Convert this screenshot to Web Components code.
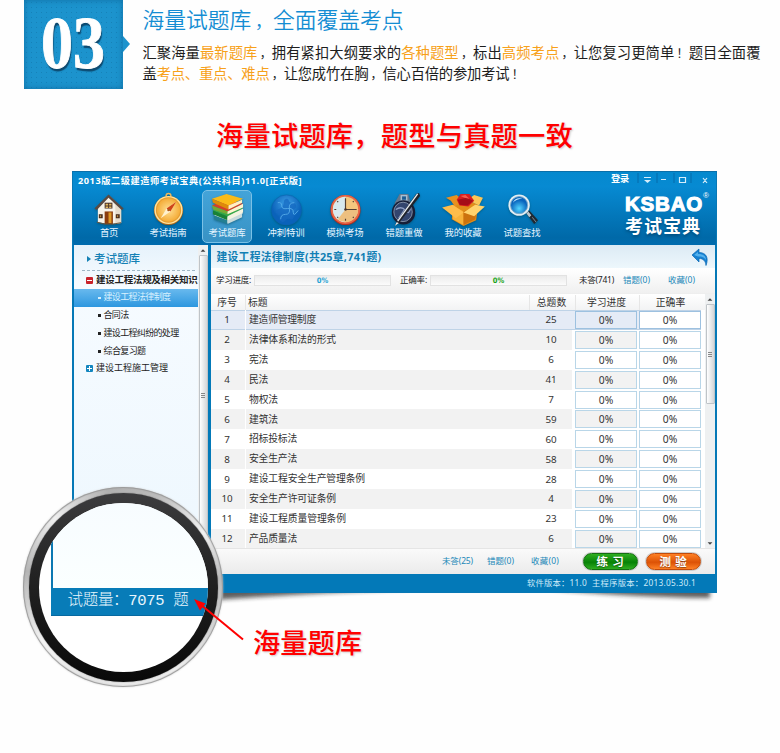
<!DOCTYPE html>
<html lang="zh-CN">
<head>
<meta charset="utf-8">
<title>海量试题库</title>
<style>
html,body{margin:0;padding:0;background:#fefefe}
body{width:780px;height:753px;overflow:hidden;font-family:"Noto Sans","Noto Sans CJK SC",sans-serif}
</style>
</head>
<body>
<promo-page></promo-page>
<script>
const define = (name, html, setup) => customElements.define(name, class extends HTMLElement {
  constructor() { super(); this.attachShadow({ mode: 'open' }); }
  connectedCallback() {
    this.shadowRoot.innerHTML = typeof html === 'function' ? html(this) : html;
    if (setup) setup(this);
  }
});

/* One line of text, tracked to occupy the width given in "w". */
define('fit-text', `<style>:host{display:inline-block;white-space:pre;line-height:1.2;flex:none}span{display:inline-block}</style><span><slot></slot></span>`, el => {
  const w = +el.getAttribute('w');
  if (!w) return;
  const span = el.shadowRoot.querySelector('span');
  const n = [...el.textContent].length;
  const natural = span.getBoundingClientRect().width;
  span.style.letterSpacing = ((w - natural) / n) + 'px';
  el.style.width = w + 'px';
});

/* Section header with the numbered badge; <i> sets a full-width mark towards the middle of its cell */
define('section-head', `<style>
:host{display:flex;height:115px;padding-left:23.500px;box-sizing:border-box}
.badge{position:relative;width:99px;height:89px;flex:none;background-color:#1c93cd;background-image:radial-gradient(#1682b8 .7px,transparent 1px);background-size:5px 5px;box-shadow:inset 0 0 6px #0f6fa4;color:#fff;font:bold 64px/88px "Liberation Serif",serif;text-align:center;text-shadow:1px 2px 1px #0d4a70;-webkit-text-stroke:.8px #fff}
.badge b{display:inline-block;transform:scaleY(1.17);transform-origin:50% 52%;}
.badge::after{content:"";position:absolute;left:99px;top:36px;border:8px solid transparent;border-left:7px solid #1c93cd;border-right:0}
.copy{padding:6px 0 0 20px;width:640px}
h2{margin:0;font-weight:350;font-size:21.800px;line-height:28px;color:#148dd3}
p{margin:9px 0 0;font-size:14.300px;line-height:20.500px;color:#1d1d1d}
em{font-style:normal;color:#f7a11a}
i{font-style:normal;font-size:.84em;padding-left:.19em;line-height:1}
fit-text{line-height:inherit;display:block}
</style>
<div class="badge"><b>03</b></div>
<div class="copy"><h2><fit-text w="261">海量试题库<i>，</i>全面覆盖考点</fit-text></h2>
<p><fit-text w="618">汇聚海量<em>最新题库</em><i>，</i>拥有紧扣大纲要求的<em>各种题型</em><i>，</i>标出<em>高频考点</em><i>，</i>让您复习更简单<i>！</i>题目全面覆</fit-text><fit-text w="381">盖<em>考点、重点、难点</em><i>，</i>让您成竹在胸<i>，</i>信心百倍的参加考试<i>！</i></fit-text></p></div>`);

const ICONS = {
home: `<path d="M6 15 18 4l12 12v16l-12 1L6 31z" fill="#f7f3e9"/><path d="M18 4 30 16v16l-6 1V14z" fill="#e6dccb"/><path d="M2.5 17 17 2.5 32.5 17l-2 1.5L17 6 5 18.5z" fill="#5b4a42"/><path d="M13 11h8v6h-8z" fill="#4b332b"/><path d="M14 12h2.6v2H14zm3.6 0H20v2h-2.400zM14 15h2.600v1.500H14zm3.600 0H20v1.500h-2.400z" fill="#e3b75f"/><path d="M13 20h8.500v13H13z" fill="#8b3d0e"/><path d="M17 21h3v11h-3z" fill="#df9b27"/><path d="M7 23h4v4H7zm17.500 0h4v4h-4z" fill="#402617"/><path d="M8 24h1.500v2H8zm17.500 0H27v2h-1.500z" fill="#bd8c42"/><path d="M5 31l8 2h9l8-1.500" stroke="#6a573e" fill="none"/>`,
compass: `<defs><radialGradient id="a"><stop offset="0" stop-color="#ffe094"/><stop offset="1" stop-color="#f4ac38"/></radialGradient></defs><circle cx="18" cy="4" r="2.500" fill="none" stroke="#eab75d" stroke-width="1.500"/><circle cx="18" cy="19" r="15" fill="#b56a18"/><circle cx="18" cy="18.500" r="14.500" fill="#ffe29b"/><circle cx="18" cy="18.500" r="13" fill="#e39a30"/><circle cx="18" cy="18.500" r="12" fill="url(#a)"/><path d="M26 10 20 20 10 27l6-10z" fill="#fff1ce"/><path d="M26 10 20 20l-4-3z" fill="#cf4318"/><circle cx="18" cy="18.500" r="1.300" fill="#ab5918"/>`,
books: `<path d="m4 24 16-6 14 4-16 10z" fill="#e5efed"/><path d="m4 24 14 5v4L4 28z" fill="#237f92"/><path d="m18 29 15-7v4l-15 7z" fill="#c9dadb"/><path d="m3 19 16-6 15 4-16 9z" fill="#36a849"/><path d="M3 19v4l15 6v-4z" fill="#198236"/><path d="m18 25 16-8v4l-16 8z" fill="#f4f3df"/><path d="m2 14 16-6 16 4-16 8z" fill="#d3402c"/><path d="m2 14 16 6v3L3 18z" fill="#77a934"/><path d="m18 20 16-8v4l-16 7z" fill="#fff4d0"/><path d="m2 7 15-5 17 5-15 7z" fill="#fbbb18"/><path d="m2 7 17 7v4L3 11z" fill="#dd8b09"/><path d="m19 14 14-6v3l-14 7z" fill="#fff2c5"/>`,
globe: `<defs><radialGradient id="a" cy=".3"><stop offset="0" stop-color="#3d9fe6"/><stop offset="1" stop-color="#0a62ba"/></radialGradient></defs><circle cx="18" cy="18.500" r="15.500" fill="url(#a)" stroke="#0864b0" stroke-width=".6"/><path d="M7 20c2-3 5-2 7-5s0-7 4-8c3 0 2 4 5 4s5 1 5 4-4 2-4 5 3 4 1 7-5-1-7 1-3 4-6 2 0-5-1-7-5 0-4-3z" fill="#1669c2" opacity=".75"/><path d="M9 11q4-1 4 3t6 3 6 4 5-2M12 28q0-5 5-5t4-6 5-6" stroke="#57adea" stroke-width=".9" fill="none"/>`,
clock: `<circle cx="18" cy="18.500" r="15.500" fill="#b92f20"/><circle cx="18" cy="18" r="15" fill="#e66749"/><circle cx="18" cy="18" r="13" fill="#f4c77e"/><path d="M18 5v26a13 13 0 0 1 0-26z" fill="#d8e9ee"/><path d="M18 18h13a13 13 0 0 1-21 10z" fill="#edc080"/><g stroke="#544133" stroke-width="1.200"><path d="M18 6.500v2m0 19v2m-11.500-11.500h2m19 0h2M9.500 9.500l1 1m15 15 1 1M9.500 26.500l1-1m15-15 1-1"/><path d="M18 8v10h10" fill="none"/></g><circle cx="18" cy="18" r="1.300" fill="#4c3328"/>`,
watch: `<path d="m13 2 9 0 2 8-2 23H10L8 11z" fill="#65778c"/><path d="M14 3h7v6h-7z" fill="#a9bed0"/><path d="M15.500 4.500h4V8h-4z" fill="#1c5c92"/><ellipse cx="17" cy="21" rx="12" ry="12.500" fill="#161e38"/><ellipse cx="16.500" cy="20.500" rx="9.500" ry="10" fill="#33456e" stroke="#98a6bb" stroke-width=".8"/><path d="M9 18q6-4 10 1t5-2M12 27l6-9" stroke="#8f9fc4" stroke-width="1.300" fill="none"/><path d="m33 1-3 1L11 29l-3 6 5-4L34 4z" fill="#20232b"/><path d="M31.500 2 11 30" stroke="#e8edf1" stroke-width="1.400"/><path d="m8 35 2-4 2 1z" fill="#fff"/>`,
box: `<path d="m7 14 12-7 14 6-2 16-13 6-12-7z" fill="#e18c19"/><path d="m7 14 11 6v14L7 28z" fill="#f7b23a"/><path d="m18 20 14-6-2 14-12 6z" fill="#cc720e"/><path d="m0 6 11-3 7 6-9 6-4-6z" fill="#e8901f"/><path d="m22 8 7-5 9 3-4 8z" fill="#fbc657"/><path d="m11 8 4-6 9 0 5 7-6 6-9-1z" fill="#d81e1f"/><path d="m12 8 9-2 7 3-6 5-8-1z" fill="#a50d18"/><path d="m15 4 5-1 4 4-5-1z" fill="#f65c4b"/><path d="m-4 16 11-3 11 8-8 6z" fill="#ffbd4b"/><path d="m18 21 12-8 10 2-11 10z" fill="#ffd36d"/>`,
search: `<defs><radialGradient id="a" cy=".7"><stop offset="0" stop-color="#52d4ff"/><stop offset="1" stop-color="#0864bd"/></radialGradient></defs><path d="m22 22 3-3 9 10-4 4z" fill="#202831"/><path d="m22 22 2-2 3 4-2 2z" fill="#bcc7ce"/><circle cx="14.500" cy="13.500" r="11" fill="#e3edf3"/><circle cx="14.500" cy="13.500" r="8.800" fill="url(#a)" stroke="#77a9c9"/><path d="M8 11q3-6 10-4-6 0-10 4" fill="#c8ecff"/><path d="m28 26 4 5" stroke="#808e9a"/>`
};
define('tool-item', el => `<style>
:host{display:flex;flex-direction:column;align-items:center;width:48px;height:50px;margin-right:9px;border:1px solid transparent;padding-top:1px;box-sizing:content-box;color:#e6f5ff;font-size:9.400px}
:host([active]){background:linear-gradient(#6cb6df99,#69b8df88);border-color:#7bc1e6;border-radius:5px}
svg{width:35px;height:35px;overflow:visible;filter:drop-shadow(0 1px 1px #0458)}
</style><svg viewBox="0 0 36 36">${ICONS[el.getAttribute('icon')]}</svg><fit-text w="${el.getAttribute('w')}">${el.getAttribute('label')}</fit-text>`);

const TOOLS = [['home','首页',18],['compass','考试指南',37],['books','考试题库',37],['globe','冲刺特训',37],['clock','模拟考场',37],['watch','错题重做',37],['box','我的收藏',37],['search','试题查找',37]];
define('app-header', `<style>
:host{display:block;height:73px;background:linear-gradient(#0589ce,#078ad2 20%,#0069a8 90%,#006bae);color:#fff}
.title{display:flex;height:16px;align-items:center;padding:1px 4px 0 5px;font-weight:700;font-size:9.200px}
.title .gap{flex:1}
.title svg{width:88px;height:16px;margin-right:-6px}
.title .login{margin-right:1px;margin-top:-4px}
.row{display:flex;justify-content:space-between;padding:1px 7px 0 11px}
.tools{display:flex}
.logo{padding-top:2px;width:88px;margin-right:-4px}
.k{display:flex;font:bold 20.500px/20px "Liberation Sans",sans-serif;-webkit-text-stroke:1.100px #fff}
.k sup{font-size:8px;line-height:8px;font-weight:400;-webkit-text-stroke:0}
.c{display:block;font-size:18px;font-weight:700;line-height:19px;text-shadow:0 2px 3px #0358}
</style>
<div class="title"><fit-text w="224">2013版二级建造师考试宝典(公共科目)11.0[正式版]</fit-text><span class="gap"></span><fit-text class="login" w="18">登录</fit-text>
<svg viewBox="0 0 88 16"><path d="M8 0v10M27 0v10M44 0v10M61 0v10" stroke="#056bab"/><g fill="none" stroke="#d6edfa" stroke-width="1.200"><path d="M14 4.500h7M31 6.500h5M49.500 4.500h6v5h-6zM73 5l4 5m0-5-4 5"/></g><path d="M14 7h7l-3.500 3z" fill="#d6edfa"/></svg></div>
<div class="row"><div class="tools">${TOOLS.map((t, i) => `<tool-item icon="${t[0]}" label="${t[1]}" w="${t[2]}" ${i === 2 ? 'active' : ''}></tool-item>`).join('')}</div>
<div class="logo"><div class="k"><fit-text w="78">KSBAO</fit-text><sup>®</sup></div><fit-text class="c" w="76">考试宝典</fit-text></div></div>`);

define('scroll-bar', el => `<style>
:host{display:flex;flex-direction:column;align-items:center;width:10px;background:#eef0f1;box-sizing:border-box;flex:none}
i{border:3px solid transparent;border-top:0;border-bottom:3px solid #444;margin:4px 0 3px;flex:none;transform:scale(.8)}
i.d{border-top:3px solid #444;border-bottom:0}
.thumb{width:7px;border:1px solid #bfc4c8;background:linear-gradient(90deg,#fff,#d4d6d8);border-radius:1px;height:${el.getAttribute('thumb')}px;display:flex;align-items:center;justify-content:center;flex:none}
.thumb::after{content:"";width:4px;height:5px;background:repeating-linear-gradient(#888 0 1px,transparent 1px 2px)}
.g{flex:1}
</style><i></i><div class="thumb"></div><span class="g"></span><i class="d"></i>`);

define('side-nav', `<style>
:host{display:flex;width:134px;height:329px;background:linear-gradient(#e6f2fb,#f6fbff 12%,#edf7fe);overflow:hidden;flex:none}
nav{width:124px;font-size:9px;color:#222}
h3{margin:0 0 0 8px;height:26px;width:113px;display:flex;align-items:center;gap:3px;color:#1481b5;font-size:11.500px;font-weight:500;border-bottom:1px dashed #9eb6c5;box-sizing:border-box;padding:3px 0 0 5px}
h3::before{content:"";border:3.500px solid transparent;border-left:4px solid #1481b5;border-right:0}
div{display:flex;align-items:center;height:18px;white-space:nowrap}
.g{padding-left:12px;gap:3px}
.g b{width:7px;height:7px;border-radius:1px;background:#c9232b;flex:none;position:relative;display:flex;align-items:center;justify-content:center}
.g b::before{content:"";width:5px;height:1px;background:#fff}
.g b.p{background:#1386bf}.g b.p::after{content:"";position:absolute;left:3px;top:1px;width:1px;height:5px;background:#fff}
.l{padding-left:24px;gap:3px}
.l::before{content:"";width:2.500px;height:2.500px;background:currentColor}
.on{background:linear-gradient(#68b9ee,#2d97df);color:#d8f1ff;height:17.500px}
</style><nav><h3><fit-text w="46">考试题库</fit-text></h3>
<div class="g" style="font-weight:700"><b></b><fit-text w="101.500" style="font-size:9.500px">建设工程法规及相关知识</fit-text></div>
<div class="l on"><fit-text w="67">建设工程法律制度</fit-text></div>
<div class="l"><fit-text w="25">合同法</fit-text></div>
<div class="l"><fit-text w="75">建设工程纠纷的处理</fit-text></div>
<div class="l"><fit-text w="42">综合复习题</fit-text></div>
<div class="g" style="height:15px"><b class="p"></b><fit-text w="72">建设工程施工管理</fit-text></div></nav>
<scroll-bar thumb="278"></scroll-bar>`);

const ROWS = [['建造师管理制度',25,67],['法律体系和法的形式',10,87],['宪法',6,19],['民法',41,19],['物权法',7,29],['建筑法',59,29],['招标投标法',60,48],['安全生产法',58,48],['建设工程安全生产管理条例',28,116],['安全生产许可证条例',4,87],['建设工程质量管理条例',23,97],['产品质量法',6,48]];
define('chapter-table', `<style>
:host{display:flex;height:254px;overflow:hidden;color:#333;font-size:9.800px}
.t{width:494px}
.r{display:grid;grid-template-columns:32px 282px 44px 62px 62px;column-gap:2px;width:490px;align-items:center;height:19.900px;box-sizing:border-box}
.r>*{text-align:center}
.r .n{text-align:left;padding-left:3px;border-left:1px solid #fff;display:flex;align-items:center;height:100%}
.r:nth-child(odd){background:linear-gradient(#f2f2f2,#f2f2f2) 0 0/361px 100% no-repeat}
.r.h{height:16px;width:494px;background:linear-gradient(#fff,#f2f3f4);font-size:9.800px}
.r.h span{border-left:1px solid #e6e6e6;height:15px;line-height:15px}.r.h span:first-child{border:0}
.c{border:1px solid #b9d6e8;height:16px;line-height:17px;font-size:10.300px}
.r:nth-child(odd) .c{background:#f2f2f2}
.r .c:last-child,.r:nth-child(odd) .c:last-child{background:#fff}
.r.s{background:#e5ebf6;box-shadow:inset 0 1px #bfd3e7,inset 0 -1px #bfd3e7}
.r.s .c{border-color:#9dc1e0}
</style><div class="t"><div class="r h"><span>序号</span><span class="n" style="padding-left:2px">标题</span><span>总题数</span><span>学习进度</span><span>正确率</span></div>
${ROWS.map((r, i) => `<div class="r ${i ? '' : 's'}"><span>${i + 1}</span><span class="n"><fit-text w="${r[2]}">${r[0]}</fit-text></span><span>${r[1]}</span><span class="c">0%</span><span class="c">0%</span></div>`).join('')}</div>
<scroll-bar thumb="98"></scroll-bar>`);

define('progress-meter', el => `<style>:host{display:block;width:135px;height:9px;border:1px solid #e2e2e2;background:linear-gradient(#ececec,#fbfbfb);font:bold 7.500px/10px "DejaVu Sans Condensed","DejaVu Sans",sans-serif;text-align:center;flex:none;color:${el.getAttribute('color')}}</style><slot></slot>`);
define('pill-button', `<style>:host{display:flex;align-items:center;justify-content:center;width:53px;height:15px;border-radius:9px;border:1px solid var(--edge);background:linear-gradient(var(--hi),var(--lo) 55%,var(--hi));box-shadow:0 0 0 1px #ccc;color:#fff;font-weight:700;font-size:11.500px;text-shadow:0 1px 1px #0006}</style><slot></slot>`);

define('main-pane', `<style>
:host{display:block;width:505px;height:329px;background:#fff;color:#222;font-size:8.500px}
.title{height:23px;box-sizing:border-box;display:flex;align-items:center;justify-content:space-between;padding:2px 6px 0 5.500px;background:linear-gradient(#dceaf4,#edf7fc);color:#127fb4;font-weight:700;font-size:10.800px}
svg{width:18px;height:20px}
.stat{height:25px;display:flex;align-items:center;background:linear-gradient(#fff,#f0f0f0);padding-left:5px;border-bottom:1px solid #eee}
a{color:#2388b8;display:inline-flex}
.foot{height:25px;display:flex;align-items:center;padding-left:231px;background:linear-gradient(#fafafa,#ebebeb);border-top:1px solid #e5e5e5}
</style>
<div class="title"><fit-text w="165">建设工程法律制度(共25章,741题)</fit-text><svg viewBox="0 0 18 20"><path d="M1 7 8 1v3.500c7 0 10 5 7 13-.5-5-3-7-7-7V14z" fill="#1681d2" stroke="#0867b1" stroke-width=".7"/><path d="m3 7 4-3v2c5 0 8 2 8 6-2-3-4-3.500-8-3.500" fill="#53b1ed"/></svg></div>
<div class="stat"><fit-text w="35" style="margin-right:3px">学习进度:</fit-text><progress-meter color="#1fa2d4">0%</progress-meter><fit-text w="27" style="margin:0 3px 0 9px">正确率:</fit-text><progress-meter color="#17a317">0%</progress-meter><fit-text w="35" style="margin-left:12px">未答(741)</fit-text><a><fit-text w="27" style="margin-left:9px">错题(0)</fit-text></a><a><fit-text w="27" style="margin-left:18px">收藏(0)</fit-text></a></div>
<chapter-table></chapter-table>
<div class="foot"><a><fit-text w="31" style="margin-right:14px">未答(25)</fit-text></a><a><fit-text w="27" style="margin-right:17px">错题(0)</fit-text></a><a><fit-text w="28" style="margin-right:24px">收藏(0)</fit-text></a>
<pill-button style="--hi:#2fae20;--lo:#078207;--edge:#146f11;margin-right:8px"><fit-text w="28">练 习</fit-text></pill-button><pill-button style="--hi:#ff8125;--lo:#dc5206;--edge:#c14b0b"><fit-text w="28">测 验</fit-text></pill-button></div>`);

define('app-window', `<style>
:host{display:block;width:645px;height:422px;box-sizing:border-box;margin-left:72px;position:relative}
.shadow{position:absolute;left:130px;top:405px;width:520px;height:40px;overflow:visible}
.win{position:relative;background:#0379b8;height:421.500px;width:645px;box-sizing:border-box;border:1px solid #0878b5;border-top-color:#0a6fa9}
.body{display:flex;gap:3px;padding:0 1px}
.status{display:flex;justify-content:flex-end;gap:5px;padding-right:20px;height:18px;align-items:center;color:#cdeaf8;font-size:8.300px}
</style>
<svg class="shadow" viewBox="0 0 520 40"><defs><filter id="b" x="-10%" y="-60%" width="120%" height="250%"><feGaussianBlur stdDeviation="2.200"/></filter></defs><path d="M0 8h508v14q-90-1-160-9H210Q110 17 0 25z" fill="#222" opacity=".72" filter="url(#b)"/></svg>
<div class="win"><app-header></app-header><div class="body"><side-nav></side-nav><main-pane></main-pane></div>
<div class="status"><fit-text w="60">软件版本：11.0</fit-text><fit-text w="104">主程序版本：2013.05.30.1</fit-text></div></div>`);

/* Magnified status bar, with the arrow that points at it */
define('lens-view', `<style>
:host{position:absolute;left:23px;top:487px;width:200px;height:200px;box-sizing:border-box;border-radius:50%;display:block}
.rim{width:200px;height:200px;border-radius:50%;box-sizing:border-box;padding:5.500px;background:conic-gradient(from 20deg,#bbb,#f2f2f2 10%,#bbb 18%,#eee 35%,#e4e4e4 50%,#f4f4f4 60%,#b5b5b5 72%,#f0f0f0 82%,#b0b0b0 92%,#bbb);box-shadow:inset 0 0 1px 1px #999,0 0 2px #ccc}
.ring{width:189px;height:189px;border-radius:50%;box-sizing:border-box;padding:10px;background:linear-gradient(#3c3c3e,#222 45%,#090909);box-shadow:0 0 1px #333}
.glass{width:169px;height:169px;border-radius:50%;overflow:hidden;background:#fff;padding-left:12px;box-sizing:border-box}
.pane{height:85px;border-left:2px solid #0b78b2;background:linear-gradient(#f7fcff,#fbffff)}
.bar{height:28px;background:#087cb8;color:#e8f6fd;display:flex;align-items:center;padding-left:17px;font:15.500px "Liberation Mono","Noto Sans CJK SC",monospace;font-weight:300;border-bottom:1px solid #0769a0;box-sizing:border-box}
.arrow{position:absolute;left:165px;top:108px;width:60px;height:50px}
</style><div class="rim"><div class="ring"><div class="glass"><div class="pane"></div><div class="bar"><fit-text w="121">试题量：7075 题</fit-text></div></div></div></div>
<svg class="arrow" viewBox="0 0 60 50"><path d="M12 9 55 44.500" stroke="#f00" stroke-width="2"/><path d="m6 4 11.500 4.500-5.500 7z" fill="#f00"/></svg>`);

define('promo-page', `<style>
:host{display:block;width:780px;height:753px;position:relative;overflow:hidden}
.red{display:flex;color:#f00;font-size:27.300px;font-weight:500;line-height:38px;text-shadow:1px 1px 2px #ccc}
h1.red{margin:0;padding:1.500px 0 0 216px;height:56px;box-sizing:border-box}
.red fit-text{line-height:inherit}
.note{position:absolute;left:253px;top:624px}
</style><section-head></section-head><h1 class="red"><fit-text w="357">海量试题库，题型与真题一致</fit-text></h1><app-window></app-window><lens-view></lens-view><div class="red note"><fit-text w="109">海量题库</fit-text></div>`);
</script>
</body>
</html>
